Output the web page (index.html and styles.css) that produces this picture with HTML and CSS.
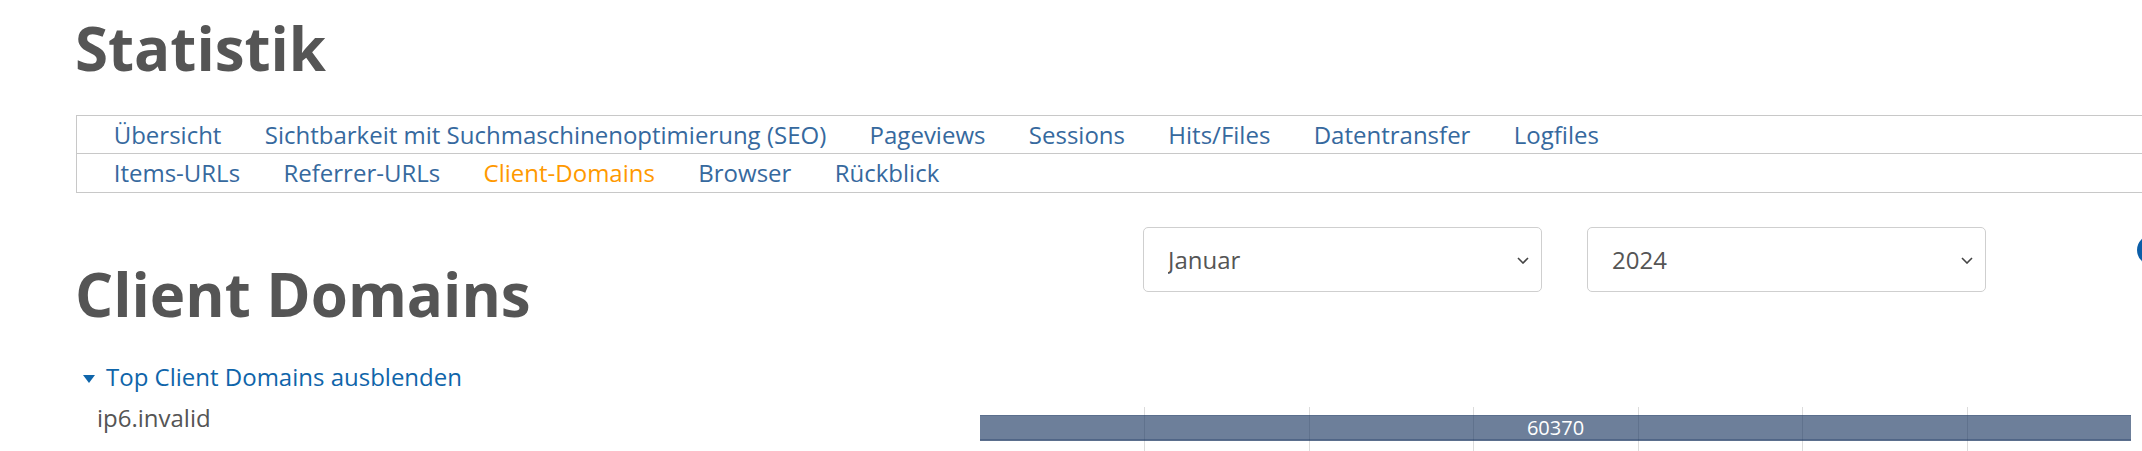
FILE: index.html
```html
<!DOCTYPE html>
<html lang="de">
<head>
<meta charset="utf-8">
<title>Statistik</title>
<link rel="stylesheet" href="styles.css">
</head>
<body>
<div class="page">
  <h1 class="title">Statistik</h1>
  <nav class="tabs">
    <ul class="tab-row">
      <li><a href="#">Übersicht</a></li>
      <li><a href="#">Sichtbarkeit mit Suchmaschinenoptimierung (SEO)</a></li>
      <li><a href="#">Pageviews</a></li>
      <li><a href="#">Sessions</a></li>
      <li><a href="#">Hits/Files</a></li>
      <li><a href="#">Datentransfer</a></li>
      <li><a href="#">Logfiles</a></li>
    </ul>
    <ul class="tab-row tab-row-last">
      <li><a href="#">Items-URLs</a></li>
      <li><a href="#">Referrer-URLs</a></li>
      <li><a href="#" class="active">Client-Domains</a></li>
      <li><a href="#">Browser</a></li>
      <li><a href="#">Rückblick</a></li>
    </ul>
  </nav>

  <section class="head-row">
    <h1 class="title section-title">Client Domains</h1>
    <div class="filters">
      <div class="select-wrap">
        <select class="select">
          <option>Januar</option>
        </select>
        <svg class="chev" width="12" height="7" viewBox="0 0 12 7"><path d="M1 1l5 5 5-5" fill="none" stroke="#444" stroke-width="1.6"/></svg>
      </div>
      <div class="select-wrap">
        <select class="select">
          <option>2024</option>
        </select>
        <svg class="chev" width="12" height="7" viewBox="0 0 12 7"><path d="M1 1l5 5 5-5" fill="none" stroke="#444" stroke-width="1.6"/></svg>
      </div>
      <span class="help" aria-label="Hilfe"></span>
    </div>
  </section>

  <a href="#" class="toggle"><svg class="caret" width="12" height="8" viewBox="0 0 12 8"><path d="M0 0h12L6 8z" fill="#0f65aa"/></svg>Top Client Domains ausblenden</a>

  <div class="chart-row">
    <div class="label">ip6.invalid</div>
    <div class="chart">
      <div class="grid">
        <span></span><span></span><span></span><span></span><span></span><span></span><span></span>
      </div>
      <div class="bar" style="width:100%">60370</div>
    </div>
  </div>
</div>
</body>
</html>
```

FILE: styles.css
```css
html, body {
  margin: 0;
  padding: 0;
  background: #fff;
}
body {
  font-family: "Open Sans", "Liberation Sans", sans-serif;
  color: #555;
  overflow: hidden;
}
.page {
  padding-left: 76px;
  overflow: hidden;
}
.title {
  font-size: 60px;
  font-weight: 700;
  line-height: 84px;
  margin: 6px 0 0 -1px;
  color: #555;
}
.tabs {
  margin-top: 25px;
  margin-right: -20px;
  border: 1px solid #c8c8c8;
}
.tab-row {
  list-style: none;
  margin: 0;
  padding: 0 0 0 15px;
  display: flex;
  height: 37px;
  border-bottom: 1px solid #c8c8c8;
}
.tab-row-last {
  border-bottom: 0;
  height: 38px;
}
.tab-row a {
  display: block;
  padding: 0 21.7px;
  font-size: 24px;
  line-height: 37px;
  color: #36699e;
  text-decoration: none;
  white-space: nowrap;
}
.tab-row a.active {
  color: #ff9900;
}
.head-row {
  display: flex;
  align-items: flex-start;
}
.section-title {
  flex: 0 0 1068px;
  margin: 59px 0 0 -1px;
}
.filters {
  display: flex;
  align-items: flex-start;
  margin-top: 34px;
}
.select-wrap {
  position: relative;
  margin-right: 45px;
}
.select {
  appearance: none;
  -webkit-appearance: none;
  width: 399px;
  height: 65px;
  border: 1px solid #cfcfcf;
  border-radius: 5px;
  background: #fff;
  padding: 0 40px 0 24px;
  font-family: "Open Sans", "Liberation Sans", sans-serif;
  font-size: 24px;
  color: #555;
  margin: 0;
  display: block;
}
.chev {
  position: absolute;
  right: 13px;
  top: 30px;
  pointer-events: none;
}
.help {
  display: block;
  margin-left: 106px;
  margin-top: 8px;
  width: 30px;
  height: 30px;
  border-radius: 50%;
  background: #0b5ea8;
  flex: 0 0 auto;
}
.toggle {
  display: block;
  margin-top: 24px;
  padding-left: 7px;
  font-size: 24px;
  line-height: 33px;
  color: #0f65aa;
  text-decoration: none;
}
.caret {
  display: inline-block;
  vertical-align: 3px;
  margin-right: 11px;
}
.chart-row {
  display: flex;
  margin-top: 8px;
}
.label {
  flex: 0 0 904px;
  box-sizing: border-box;
  padding-left: 21px;
  font-size: 24px;
  line-height: 33px;
  color: #555;
}
.chart {
  position: relative;
  flex: 0 0 1151px;
  margin-top: 6px;
  height: 60px;
}
.grid {
  display: grid;
  grid-template-columns: repeat(7, 1fr);
  height: 100%;
}
.grid span {
  border-left: 1px solid #dcdcdc;
}
.grid span:first-child {
  border-left: 0;
}
.bar {
  position: absolute;
  left: 0;
  top: 8px;
  height: 26px;
  box-sizing: border-box;
  background: rgba(26, 54, 97, 0.64);
  border-top: 1px solid rgba(26, 54, 97, 0.22);
  border-bottom: 1px solid rgba(26, 54, 97, 0.22);
  box-shadow: inset 0 -1px 0 rgba(26, 54, 97, 0.35);
  color: #fff;
  font-size: 20px;
  line-height: 24px;
  text-align: center;
}
```
